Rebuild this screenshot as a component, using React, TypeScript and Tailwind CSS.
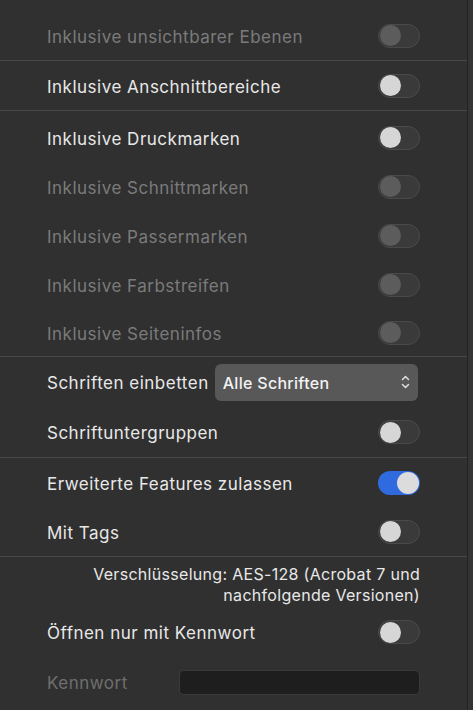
import React from "react";

function Toggle({ state }: { state: "off" | "disabled" | "on" }) {
  if (state === "on") {
    return (
      <div className="w-[42px] h-[24px] rounded-full bg-[#2f6adf] flex items-center justify-end px-[1px]">
        <div className="w-[22px] h-[22px] rounded-full bg-[#dcdcdc]" />
      </div>
    );
  }
  return (
    <div className="w-[42px] h-[24px] rounded-full bg-[#3a3a3a] border border-[#4a4a4a] flex items-center px-[1px]">
      <div
        className={
          state === "off"
            ? "w-[21px] h-[21px] rounded-full bg-[#d6d6d6]"
            : "w-[21px] h-[21px] rounded-full bg-[#5c5c5c]"
        }
      />
    </div>
  );
}

function Row({
  label,
  state,
  h = "h-[49px]",
}: {
  label: string;
  state: "off" | "disabled" | "on";
  h?: string;
}) {
  return (
    <div className={`${h} flex items-center justify-between pl-[47px] pr-[47px]`}>
      <span className={state === "disabled" ? "pt-[4px] text-[#7b7b7b]" : "pt-[4px] text-[#e8e8e8]"}>{label}</span>
      <Toggle state={state} />
    </div>
  );
}

function Sep() {
  return <div className="h-px bg-[#484848]" />;
}

export default function App() {
  return (
    <div
      className="w-[473px] h-[710px] bg-[#303030] flex overflow-hidden text-[17px] tracking-[0.5px]"
      style={{ fontFamily: "Inter, 'Noto Sans', sans-serif" }}
    >
      <div className="w-[467px] flex flex-col">
        <div className="h-[11px]" />
        <Row label="Inklusive unsichtbarer Ebenen" state="disabled" />
        <Sep />
        <Row label="Inklusive Anschnittbereiche" state="off" />
        <Sep />
        <div className="h-[2px]" />
        <Row label="Inklusive Druckmarken" state="off" />
        <Row label="Inklusive Schnittmarken" state="disabled" />
        <Row label="Inklusive Passermarken" state="disabled" />
        <Row label="Inklusive Farbstreifen" state="disabled" />
        <Row label="Inklusive Seiteninfos" state="disabled" h="h-[47px]" />
        <Sep />
        <div className="h-[50px] flex items-center pl-[47px] pr-[49px]">
          <span className="pt-[4px] text-[#e8e8e8] mr-[6px] whitespace-nowrap">Schriften einbetten</span>
          <div className="flex-1 h-[37px] rounded-[6px] bg-[#585858] flex items-center justify-between pl-[8px] pr-[8px]">
            <span className="pt-[2px] text-[#f2f2f2] text-[16px] font-medium tracking-[0.3px]">Alle Schriften</span>
            <svg width="9" height="16" viewBox="0 0 9 16" fill="none" stroke="#d8d8d8" strokeWidth="1.6" strokeLinecap="round" strokeLinejoin="round">
              <path d="M1.5 5.5 L4.5 2.5 L7.5 5.5" />
              <path d="M1.5 10.5 L4.5 13.5 L7.5 10.5" />
            </svg>
          </div>
        </div>
        <Row label="Schriftuntergruppen" state="off" h="h-[50px]" />
        <Sep />
        <Row label="Erweiterte Features zulassen" state="on" />
        <Row label="Mit Tags" state="off" />
        <Sep />
        <div className="pr-[47px] pt-[7px] text-right text-[#e8e8e8] text-[16px] tracking-[0.3px] leading-[21px]">
          Verschlüsselung: AES-128 (Acrobat 7 und
          <br />
          nachfolgende Versionen)
        </div>
        <div className="h-[1px]" />
        <Row label="Öffnen nur mit Kennwort" state="off" h="h-[50px]" />
        <div className="h-[50px] flex items-center pl-[47px] pr-[47px]">
          <span className="pt-[4px] text-[#6f6f6f] w-[132px]">Kennwort</span>
          <div className="flex-1 h-[25px] rounded-[5px] bg-[#1e1e1e] border border-[#3a3a3a]" />
        </div>
      </div>
      <div className="w-px bg-[#222222]" />
      <div className="flex-1 bg-[#353535]" />
    </div>
  );
}
